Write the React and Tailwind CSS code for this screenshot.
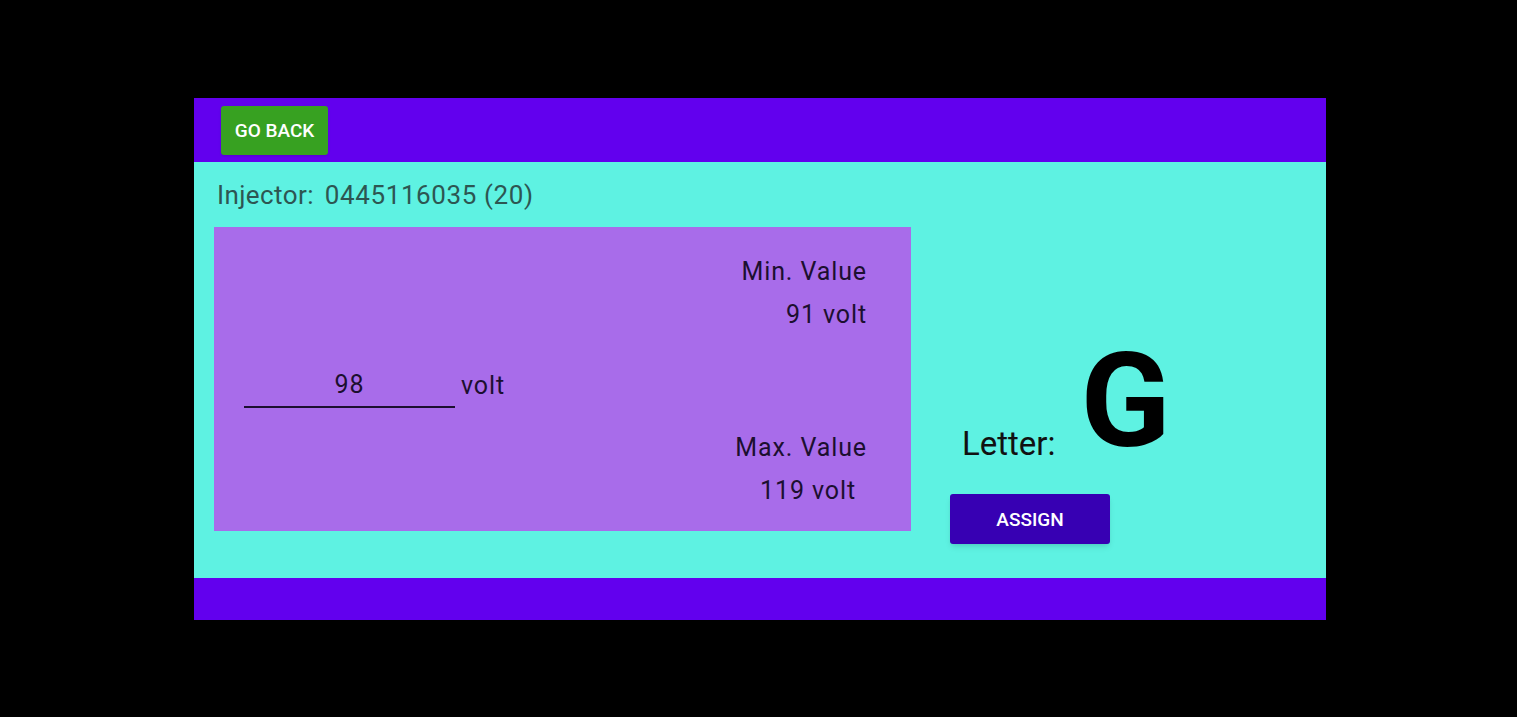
const font = { fontFamily: 'Roboto, "Noto Sans", sans-serif' };

const ValueLabel = ({ children, className = '' }) => (
  <div className={`h-[43px] flex items-center justify-end text-[25px] tracking-[0.9px] text-[#1c0f30] ${className}`}>
    {children}
  </div>
);

const App = () => {
  return (
    <div className="w-[1517px] h-[717px] bg-black pt-[98px] pl-[194px]" style={font}>
      <div className="w-[1132px] flex flex-col">
        <div className="h-[64px] bg-[#6200ee] flex items-center pl-[27px]">
          <button className="w-[107px] h-[49px] pt-[3px] bg-[#37a121] rounded-[3px] text-white text-[19px] font-medium shadow-sm">
            GO BACK
          </button>
        </div>

        <div className="h-[416px] bg-[#5ef2e2] pl-[20px] pt-[17px]">
          <div className="pl-[3px] h-[32px] flex items-center text-[26px] tracking-[0.4px] text-[#2d5652]">
            <span>Injector:</span>
            <span className="ml-[11px] tracking-[0.6px]">0445116035 (20)</span>
          </div>

          <div className="flex mt-[16px]">
            <div className="w-[697px] h-[304px] bg-[#a86cea] flex">
              <div className="flex-1 flex items-start pt-[137px] pl-[30px]">
                <div className="w-[211px] h-[44px] border-b-2 border-[#1c0f30] flex items-center justify-center text-[25px] tracking-[0.9px] text-[#1c0f30]">
                  98
                </div>
                <span className="ml-[6px] h-[44px] flex items-center text-[25px] tracking-[0.9px] text-[#1c0f30]">volt</span>
              </div>
              <div className="flex flex-col pt-[23px] pr-[44px]">
                <ValueLabel>Min. Value</ValueLabel>
                <ValueLabel>91 volt</ValueLabel>
                <div className="h-[90px]" />
                <ValueLabel>Max. Value</ValueLabel>
                <ValueLabel className="pr-[11px]">119 volt</ValueLabel>
              </div>
            </div>

            <div className="ml-[39px] flex flex-col">
              <div className="flex items-end pt-[108px] pl-[12px]">
                <span className="text-[33px] text-[#111] leading-none mb-[7px]">Letter:</span>
                <span className="ml-[25px] text-[132px] font-bold text-black leading-none">G</span>
              </div>
              <button className="mt-[27px] w-[160px] h-[50px] pt-[2px] bg-[#3700b3] rounded-[3px] text-white text-[19px] font-medium shadow-md">
                ASSIGN
              </button>
            </div>
          </div>
        </div>

        <div className="h-[42px] bg-[#6200ee]" />
      </div>
    </div>
  );
};

export default App;
